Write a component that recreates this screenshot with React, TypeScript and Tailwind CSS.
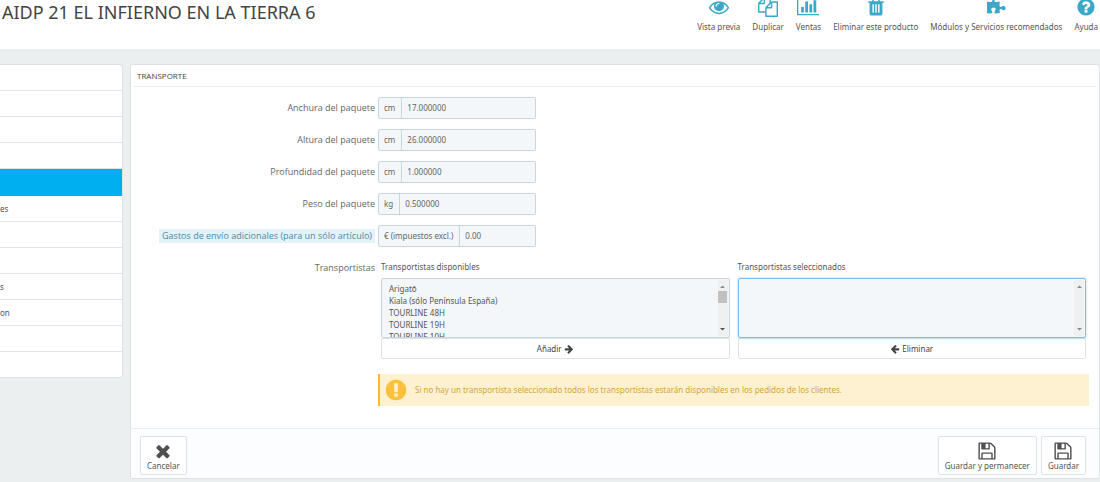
import { useState } from "react";

type IconProps = {
  d: string;
  className?: string;
  viewBox?: string;
};

const Icon = ({ d, className, viewBox = "0 0 1792 1792" }: IconProps) => (
  <svg
    xmlns="http://www.w3.org/2000/svg"
    className={className}
    viewBox={viewBox}
    fill="currentColor"
    aria-hidden="true"
  >
    <path d={d} />
  </svg>
);

const icons = {
  eye: "M1664 960q-152-236-381-353 61 104 61 225 0 185-131.5 316.5t-316.5 131.5-316.5-131.5-131.5-316.5q0-121 61-225-229 117-381 353 133 205 333.5 326.5t434.5 121.5 434.5-121.5 333.5-326.5zm-720-384q0-20-14-34t-34-14q-125 0-214.5 89.5t-89.5 214.5q0 20 14 34t34 14 34-14 14-34q0-86 61-147t147-61q20 0 34-14t14-34zm848 384q0 34-20 69-140 230-376.5 368.5t-499.5 138.5-499.5-139-376.5-368q-20-35-20-69t20-69q140-229 376.5-368t499.5-139 499.5 139 376.5 368q20 35 20 69z",
  copy: "M1696 384q40 0 68 28t28 68v1216q0 40-28 68t-68 28h-960q-40 0-68-28t-28-68v-288h-544q-40 0-68-28t-28-68v-672q0-40 20-88t48-76l408-408q28-28 76-48t88-20h416q40 0 68 28t28 68v328q68-40 128-40h416zm-544 213l-299 299h299v-299zm-640-384l-299 299h299v-299zm196 647l316-316v-416h-384v416q0 40-28 68t-68 28h-416v640h512v-256q0-40 20-88t48-76zm956 804v-1152h-384v416q0 40-28 68t-68 28h-416v640h896z",
  chart: "M640 896v512h-256v-512h256zm384-512v1024h-256v-1024h256zm1024 1152v128h-2048v-1536h128v1408h1920zm-640-896v768h-256v-768h256zm384-384v1152h-256v-1152h256z",
  trash: "M704 1376v-704q0-14-9-23t-23-9h-64q-14 0-23 9t-9 23v704q0 14 9 23t23 9h64q14 0 23-9t9-23zm256 0v-704q0-14-9-23t-23-9h-64q-14 0-23 9t-9 23v704q0 14 9 23t23 9h64q14 0 23-9t9-23zm256 0v-704q0-14-9-23t-23-9h-64q-14 0-23 9t-9 23v704q0 14 9 23t23 9h64q14 0 23-9t9-23zm-544-992h448l-48-117q-7-9-17-11h-317q-10 2-17 11zm928 32v64q0 14-9 23t-23 9h-96v948q0 83-47 143.5t-113 60.5h-832q-66 0-113-58.5t-47-141.5v-952h-96q-14 0-23-9t-9-23v-64q0-14 9-23t23-9h309l70-167q15-37 54-63t79-26h320q40 0 79 26t54 63l70 167h309q14 0 23 9t9 23z",
  puzzle: "M1755 1004q0 81-44.5 135t-123.5 54q-41 0-77.5-17.5t-59-38-56.5-38-71-17.5q-110 0-110 124 0 39 16 115t15 115v5q-22 0-33 1-34 3-97.5 11.5t-115.5 13.5-98 5q-61 0-103-26.5t-42-83.5q0-37 17.5-71t38-56.5 38-59 17.5-77.5q0-79-54-123.5t-135-44.5q-84 0-143 45.5t-59 127.5q0 43 15 83t33.5 64.5 33.5 53 15 50.5q0 45-46 89-37 35-117 35-95 0-245-24-9-2-27.5-4t-27.5-4l-13-2q-1 0-3-1-2 0-2-1v-1024q2 1 17.5 3.5t34 5 21.5 3.5q150 24 245 24 80 0 117-35 46-44 46-89 0-22-15-50.5t-33.5-53-33.5-64.5-15-83q0-82 59-127.5t144-45.5q80 0 134 44.5t54 123.5q0 41-17.5 77.5t-38 59-38 56.5-17.5 71q0 57 42 83.5t103 26.5q64 0 180-15t163-17v2q-1 2-3.5 17.5t-5 34-3.5 21.5q-24 150-24 245 0 80 35 117 44 46 89 46 22 0 50.5-15t53-33.5 64.5-33.5 83-15q82 0 127.5 59t45.5 143z",
  help: "M1024 1376v-192q0-14-9-23t-23-9h-192q-14 0-23 9t-9 23v192q0 14 9 23t23 9h192q14 0 23-9t9-23zm256-672q0-88-55.5-163t-138.5-116-170-41q-243 0-371 213-15 24 8 42l132 100q7 6 19 6 16 0 25-12 53-68 86-92 34-24 86-24 48 0 85.5 26t37.5 59q0 38-20 61t-68 45q-63 28-115.5 86.5t-52.5 125.5v36q0 14 9 23t23 9h192q14 0 23-9t9-23q0-19 21.5-49.5t54.5-49.5q32-18 49-28.5t46-35 44.5-48 28-60.5 12.5-81zm384 192q0 209-103 385.5t-279.5 279.5-385.5 103-385.5-103-279.5-279.5-103-385.5 103-385.5 279.5-279.5 385.5-103 385.5 103 279.5 279.5 103 385.5z",
  save: "M512 1536h768v-384h-768v384zm896 0h128v-896q0-14-10-38.5t-20-34.5l-281-281q-10-10-34-20t-39-10v416q0 40-28 68t-68 28h-576q-40 0-68-28t-28-68v-416h-128v1280h128v-416q0-40 28-68t68-28h832q40 0 68 28t28 68v416zm-384-928v-320q0-13-9.5-22.5t-22.5-9.5h-192q-13 0-22.5 9.5t-9.5 22.5v320q0 13 9.5 22.5t22.5 9.5h192q13 0 22.5-9.5t9.5-22.5zm640 32v928q0 40-28 68t-68 28h-1344q-40 0-68-28t-28-68v-1344q0-40 28-68t68-28h928q40 0 88 20t76 48l280 280q28 28 48 76t20 88z",
  times: "M1490 1322q0 40-28 68l-136 136q-28 28-68 28t-68-28l-294-294-294 294q-28 28-68 28t-68-28l-136-136q-28-28-28-68t28-68l294-294-294-294q-28-28-28-68t28-68l136-136q28-28 68-28t68 28l294 294 294-294q28-28 68-28t68 28l136 136q28 28 28 68t-28 68l-294 294 294 294q28 28 28 68z",
  arrowRight: "M1600 960q0 54-37 91l-651 651q-39 37-91 37-51 0-90-37l-75-75q-38-38-38-91t38-91l293-293h-704q-52 0-84.5-37.5t-32.5-90.5v-128q0-53 32.5-90.5t84.5-37.5h704l-293-294q-38-36-38-90t38-90l75-75q38-38 90-38 53 0 91 38l651 651q37 35 37 90z",
  arrowLeft: "M1664 896v128q0 53-32.5 90.5t-84.5 37.5h-704l293 294q38 36 38 90t-38 90l-75 76q-37 37-90 37-52 0-91-37l-651-652q-37-37-37-90 0-52 37-91l651-650q38-38 91-38 52 0 90 38l75 74q38 38 38 91t-38 91l-293 293h704q52 0 84.5 37.5t32.5 90.5z",
  warning: "M896 128q209 0 385.5 103t279.5 279.5 103 385.5-103 385.5-279.5 279.5-385.5 103-385.5-103-279.5-279.5-103-385.5 103-385.5 279.5-279.5 385.5-103zm128 1247v-190q0-14-9-23.5t-22-9.5h-192q-13 0-23 10t-10 23v190q0 13 10 23t23 10h192q13 0 22-9.5t9-23.5zm-2-344l18-621q0-12-10-18-10-8-24-8h-220q-14 0-24 8-10 6-10 18l17 621q0 10 10 17.5t24 7.5h185q14 0 23.5-7.5t10.5-17.5z",
};

const toolbar = [
  { label: "Vista previa", icon: icons.eye },
  { label: "Duplicar", icon: icons.copy },
  { label: "Ventas", icon: icons.chart, wide: true },
  { label: "Eliminar este producto", icon: icons.trash },
  { label: "Módulos y Servicios recomendados", icon: icons.puzzle },
  { label: "Ayuda", icon: icons.help },
];

const tabs = ["", "", "", "", "", "es", "", "", "s", "on", "", ""];
const activeTab = 4;

const fields = [
  { id: "width", label: "Anchura del paquete", unit: "cm", value: "17.000000" },
  { id: "height", label: "Altura del paquete", unit: "cm", value: "26.000000" },
  { id: "depth", label: "Profundidad del paquete", unit: "cm", value: "1.000000" },
  { id: "weight", label: "Peso del paquete", unit: "kg", value: "0.500000" },
  {
    id: "shipping",
    label: "Gastos de envío adicionales (para un sólo artículo)",
    unit: "€ (impuestos excl.)",
    value: "0.00",
    hint: true,
  },
];

const carriers = [
  "Arigatō",
  "Kiala (sólo Península España)",
  "TOURLINE 48H",
  "TOURLINE 19H",
  "TOURLINE 10H",
];

const Header = () => (
  <header className="flex h-[49px] items-start justify-between overflow-hidden bg-white pl-0.5 pr-0.5">
    <h1 className="text-[18px] leading-6 text-[#444]">AIDP 21 EL INFIERNO EN LA TIERRA 6</h1>
    <nav className="-mt-[3px] flex gap-3">
      {toolbar.map((item) => (
        <a key={item.label} href="#" className="flex flex-col items-center text-[#555]">
          <Icon
            d={item.icon}
            viewBox={item.wide ? "0 0 2048 1792" : undefined}
            className={item.wide ? "h-5 w-[22px] text-[#3ba7c9]" : "size-5 text-[#3ba7c9]"}
          />
          <span className="mt-1 text-[8px] leading-3">{item.label}</span>
        </a>
      ))}
    </nav>
  </header>
);

const Sidebar = () => (
  <nav className="w-[123px] shrink-0 self-start overflow-hidden rounded-r-sm border-r border-t border-[#dde2e4] bg-white">
    {tabs.map((tab, index) => (
      <a
        key={index}
        href="#"
        aria-label={tab || `Sección ${index + 1}`}
        className={
          index === activeTab
            ? "-mr-px block h-[27px] bg-[#00aff0]"
            : "block h-[26px] border-b border-[#e1e5e7] text-[8px] leading-[26px] text-[#555]"
        }
      >
        {tab}
      </a>
    ))}
  </nav>
);

type FieldProps = (typeof fields)[number];

const Field = ({ id, label, unit, value, hint }: FieldProps) => {
  const [current, setCurrent] = useState(value);

  return (
    <div className="flex items-center">
      <label
        htmlFor={id}
        className="w-1/4 pr-px text-right font-['Open_Sans',sans-serif] text-[9px] leading-[14px] text-[#666]"
      >
        <span className={hint ? "inline-block bg-[#e3f3fa] px-[3px] text-[#4a8aa8]" : ""}>
          {label}
        </span>
      </label>
      <div className="ml-0.5 flex h-[22px] w-[158px] rounded-xs border border-[#c7d6db] bg-[#f3f7f9] text-[8px] text-[#666]">
        <span className="flex items-center whitespace-nowrap border-r border-[#c7d6db] pl-[5px] pr-[6px]">
          {unit}
        </span>
        <input
          id={id}
          type="text"
          value={current}
          onChange={(e) => setCurrent(e.target.value)}
          className="w-full min-w-0 bg-transparent px-[5px] outline-none"
        />
      </div>
    </div>
  );
};

type CarrierListProps = {
  id: string;
  label: string;
  options: string[];
  focused?: boolean;
  children: React.ReactNode;
};

const CarrierList = ({ id, label, options, focused, children }: CarrierListProps) => {
  const arrow = focused ? "size-[5px] text-[#8a8a8a]" : "size-[5px] text-[#505050]";

  return (
    <div className="flex min-w-0 flex-1 flex-col">
      <label htmlFor={id} className="mb-[5px] text-[8px] leading-[12px] text-[#555]">
        {label}
      </label>
      <div
        className={
          focused
            ? "relative h-[60px] rounded-xs border border-[#7fbfe3] bg-[#f3f7f9] shadow-[0_0_3px_#a5d3ee]"
            : "relative h-[60px] rounded-xs border border-[#c7d6db] bg-[#f3f7f9]"
        }
      >
        <select
          id={id}
          multiple
          className="block h-full w-full overflow-y-scroll bg-transparent px-[5px] py-1 text-[8px] text-[#555] outline-none [scrollbar-width:none]"
        >
          {options.map((name) => (
            <option key={name} className="h-3 px-0.5 py-0 leading-3">
              {name}
            </option>
          ))}
        </select>
        {/* Scrollbar */}
        <div className="absolute inset-y-px right-px flex w-[10px] flex-col items-center bg-[#eff0f1] py-1">
          <Icon d="M0 8l5-5 5 5z" viewBox="0 0 10 10" className="size-[5px] text-[#8a8a8a]" />
          {!focused && <div className="mt-0.5 h-3 w-[9px] bg-[#c1c1c1]" />}
          <Icon d="M0 2l5 5 5-5z" viewBox="0 0 10 10" className={`mt-auto ${arrow}`} />
        </div>
      </div>
      <button
        type="button"
        className="flex h-[21px] items-center justify-center gap-0.5 rounded-xs border border-[#dde2e4] bg-white text-[8px] text-[#444]"
      >
        {children}
      </button>
    </div>
  );
};

const FooterButton = ({ icon, label }: { icon: string; label: string }) => (
  <button
    type="button"
    className="flex h-[39px] flex-col items-center rounded-xs border border-[#dde2e4] bg-white px-[6px] pt-1 text-[8px] leading-[10px] text-[#555]"
  >
    <Icon d={icon} className="size-5 text-[#505050]" />
    {label}
  </button>
);

const App = () => {
  return (
    <div className="min-h-screen overflow-hidden bg-[#ebeff0] font-['Noto_Sans','Open_Sans',sans-serif]">
      <Header />
      <div className="flex gap-[7px] pt-[15px]">
        <Sidebar />
        <main className="min-w-0 flex-1 rounded-xs border border-[#dde2e4] bg-white">
          <h2 className="mx-[3px] h-[22px] border-b border-[#e8ecee] px-[3px] font-['Open_Sans',sans-serif] text-[8px] leading-[22px] text-[#444]">
            TRANSPORTE
          </h2>

          <form className="px-[6px] pb-[22px] pt-[10px]">
            <div className="flex flex-col gap-[10px]">
              {fields.map((field) => (
                <Field key={field.id} {...field} />
              ))}
            </div>

            <div className="mt-[14px] flex">
              <span className="w-1/4 pr-px text-right font-['Open_Sans',sans-serif] text-[9px] leading-[14px] text-[#666]">
                Transportistas
              </span>
              <div className="flex flex-1 gap-2 pl-[5px] pr-[7px]">
                <CarrierList id="available" label="Transportistas disponibles" options={carriers}>
                  Añadir
                  <Icon d={icons.arrowRight} className="size-[10px]" />
                </CarrierList>
                <CarrierList id="selected" label="Transportistas seleccionados" options={[]} focused>
                  <Icon d={icons.arrowLeft} className="size-[10px]" />
                  Eliminar
                </CarrierList>
              </div>
            </div>

            <div className="ml-[25%] pl-0.5 pr-1 pt-[15px]">
              <div
                role="alert"
                className="flex h-8 items-center gap-[7px] border-l-2 border-[#fbbb22] bg-[#fdf1d1] pl-1 text-[8px] text-[#d2a63c]"
              >
                <Icon d={icons.warning} className="size-6 text-[#fbc13c]" />
                Si no hay un transportista seleccionado todos los transportistas estarán disponibles en los
                pedidos de los clientes.
              </div>
            </div>
          </form>

          <footer className="flex gap-1 border-t border-[#e8ecee] bg-[#fcfdfe] pb-[3px] pl-[9px] pr-[13px] pt-[7px]">
            <FooterButton icon={icons.times} label="Cancelar" />
            <div className="ml-auto flex gap-1">
              <FooterButton icon={icons.save} label="Guardar y permanecer" />
              <FooterButton icon={icons.save} label="Guardar" />
            </div>
          </footer>
        </main>
      </div>
    </div>
  );
};

export default App;
